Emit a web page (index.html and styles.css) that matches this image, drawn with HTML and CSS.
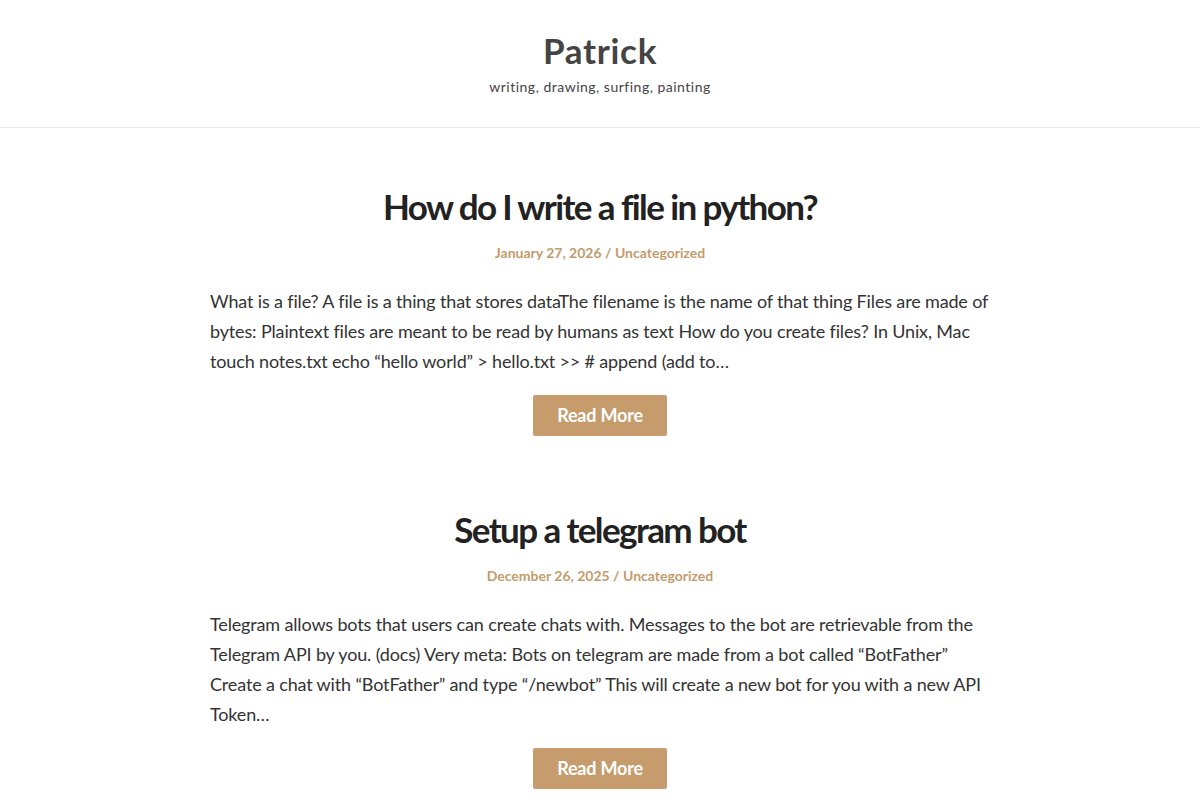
FILE: index.html
```html
<!DOCTYPE html>
<html lang="en">
<head>
    <meta charset="UTF-8">
    <meta name="viewport" content="width=device-width, initial-scale=1.0">
    <title>Patrick</title>
    <link rel="stylesheet" href="styles.css">
</head>
<body>
    <header class="site-header">
        <h1 class="site-title">Patrick</h1>
        <p class="site-tagline">writing, drawing, surfing, painting</p>
    </header>

    <main class="content">
        <article class="post">
            <h2 class="post-title">How do I write a file in python?</h2>
            <div class="post-meta"><a href="#">January 27, 2026</a> / <a href="#">Uncategorized</a></div>
            <p class="post-excerpt">What is a file? A file is a thing that stores dataThe filename is the name of that thing Files are made of bytes: Plaintext files are meant to be read by humans as text How do you create files? In Unix, Mac touch notes.txt echo &ldquo;hello world&rdquo; &gt; hello.txt &gt;&gt; # append (add to&hellip;</p>
            <div class="post-more"><a class="button" href="#">Read More</a></div>
        </article>

        <article class="post">
            <h2 class="post-title">Setup a telegram bot</h2>
            <div class="post-meta"><a href="#">December 26, 2025</a> / <a href="#">Uncategorized</a></div>
            <p class="post-excerpt">Telegram allows bots that users can create chats with. Messages to the bot are retrievable from the Telegram API by you. (docs) Very meta: Bots on telegram are made from a bot called &ldquo;BotFather&rdquo; Create a chat with &ldquo;BotFather&rdquo; and type &ldquo;/newbot&rdquo; This will create a new bot for you with a new API Token&hellip;</p>
            <div class="post-more"><a class="button" href="#">Read More</a></div>
        </article>
    </main>
</body>
</html>
```

FILE: styles.css
```css
body {
    font-family: Lato, "Open Sans", sans-serif;
    margin: 0;
    padding: 0;
    background-color: #fff;
    color: #333;
}
.site-header {
    text-align: center;
    padding: 30px 20px 29px;
    border-bottom: 1px solid #e8e8e8;
}
.site-title {
    margin: 0;
    font-size: 35px;
    line-height: 40px;
    font-weight: 700;
    color: #444;
    letter-spacing: 0.7px;
}
.site-tagline {
    margin: 6px 0 0;
    font-size: 14px;
    line-height: 22px;
    color: #444;
    letter-spacing: 0.5px;
}
.content {
    max-width: 780px;
    margin: 0 auto;
    padding: 56px 20px 0;
}
.post {
    margin-bottom: 71px;
}
.post-title {
    margin: 0;
    text-align: center;
    font-size: 35px;
    line-height: 44px;
    font-weight: 700;
    color: #222;
    letter-spacing: -1.6px;
}
.post-meta {
    text-align: center;
    margin-top: 15px;
    font-size: 14px;
    line-height: 20px;
    font-weight: 700;
    color: #c49b6c;
}
.post-meta a {
    color: #c49b6c;
    text-decoration: none;
}
.post-excerpt {
    margin: 23px 0 0;
    font-size: 18px;
    line-height: 30px;
    color: #333;
    letter-spacing: -0.15px;
}
.post-more {
    text-align: center;
    margin-top: 19px;
}
.button {
    display: inline-block;
    background-color: #c69c6d;
    color: #fff;
    font-size: 18px;
    font-weight: 700;
    line-height: 25px;
    padding: 8px 24px;
    border-radius: 2px;
    text-decoration: none;
    letter-spacing: -0.2px;
}
```
